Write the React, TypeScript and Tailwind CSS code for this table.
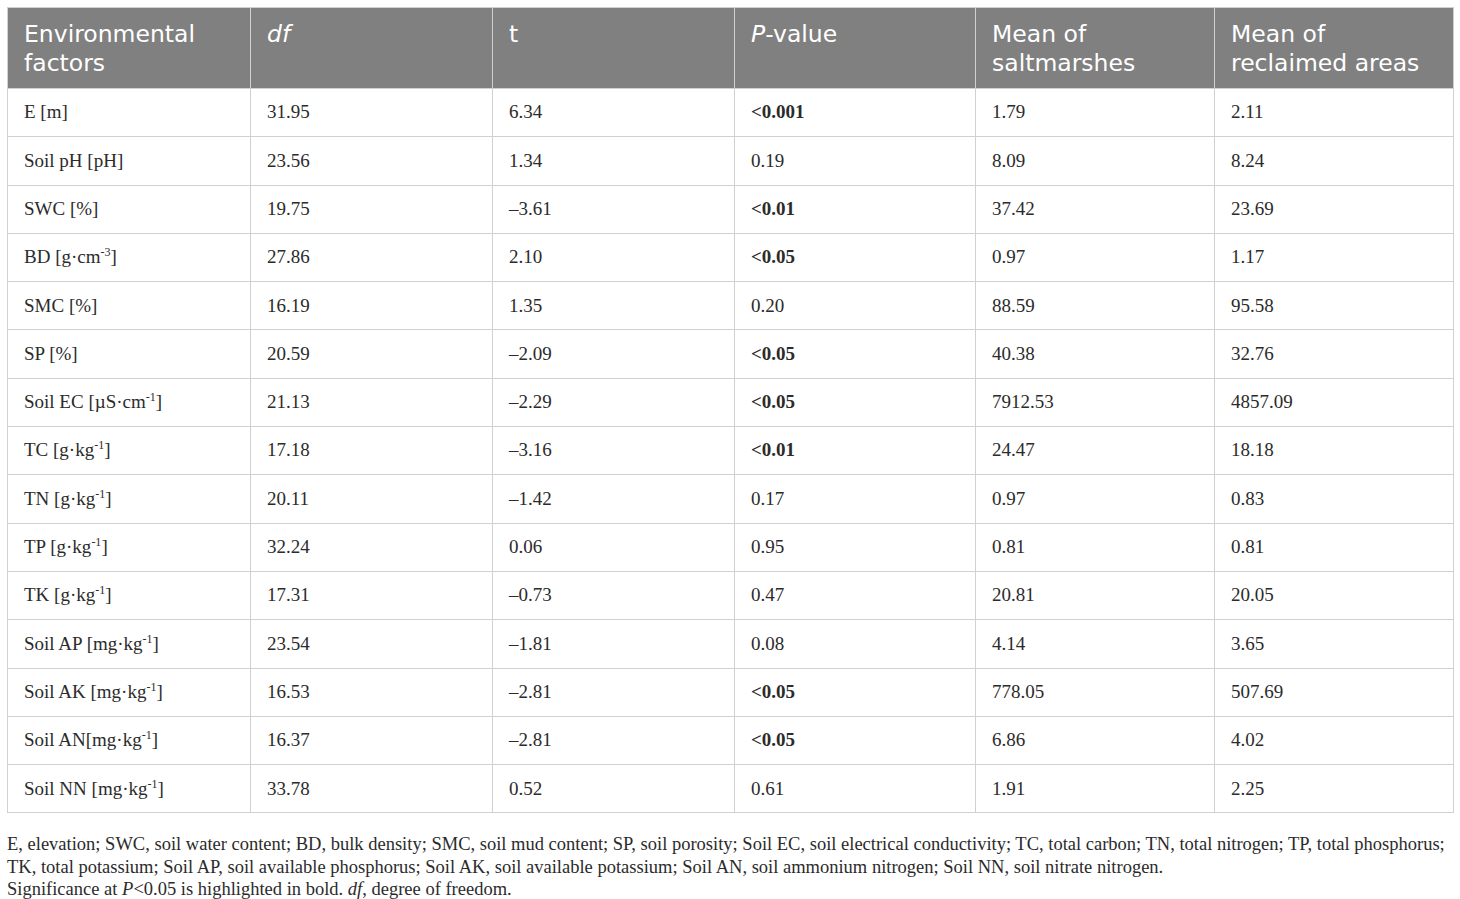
import React from 'react';

type Row = {
  factor: React.ReactNode;
  df: string;
  t: string;
  p: string;
  sig: boolean;
  salt: string;
  recl: string;
};

// unit with superscript exponent
const unit = (base: string, sup: string, tail = ']') => (
  <>
    {base}
    <span className="text-[12px] relative -top-[7px]">{sup}</span>
    {tail}
  </>
);

const rows: Row[] = [
  { factor: 'E [m]', df: '31.95', t: '6.34', p: '<0.001', sig: true, salt: '1.79', recl: '2.11' },
  { factor: 'Soil pH [pH]', df: '23.56', t: '1.34', p: '0.19', sig: false, salt: '8.09', recl: '8.24' },
  { factor: 'SWC [%]', df: '19.75', t: '–3.61', p: '<0.01', sig: true, salt: '37.42', recl: '23.69' },
  { factor: unit('BD [g·cm', '-3'), df: '27.86', t: '2.10', p: '<0.05', sig: true, salt: '0.97', recl: '1.17' },
  { factor: 'SMC [%]', df: '16.19', t: '1.35', p: '0.20', sig: false, salt: '88.59', recl: '95.58' },
  { factor: 'SP [%]', df: '20.59', t: '–2.09', p: '<0.05', sig: true, salt: '40.38', recl: '32.76' },
  { factor: unit('Soil EC [µS·cm', '-1'), df: '21.13', t: '–2.29', p: '<0.05', sig: true, salt: '7912.53', recl: '4857.09' },
  { factor: unit('TC [g·kg', '-1'), df: '17.18', t: '–3.16', p: '<0.01', sig: true, salt: '24.47', recl: '18.18' },
  { factor: unit('TN [g·kg', '-1'), df: '20.11', t: '–1.42', p: '0.17', sig: false, salt: '0.97', recl: '0.83' },
  { factor: unit('TP [g·kg', '-1'), df: '32.24', t: '0.06', p: '0.95', sig: false, salt: '0.81', recl: '0.81' },
  { factor: unit('TK [g·kg', '-1'), df: '17.31', t: '–0.73', p: '0.47', sig: false, salt: '20.81', recl: '20.05' },
  { factor: unit('Soil AP [mg·kg', '-1'), df: '23.54', t: '–1.81', p: '0.08', sig: false, salt: '4.14', recl: '3.65' },
  { factor: unit('Soil AK [mg·kg', '-1'), df: '16.53', t: '–2.81', p: '<0.05', sig: true, salt: '778.05', recl: '507.69' },
  { factor: unit('Soil AN[mg·kg', '-1'), df: '16.37', t: '–2.81', p: '<0.05', sig: true, salt: '6.86', recl: '4.02' },
  { factor: unit('Soil NN [mg·kg', '-1'), df: '33.78', t: '0.52', p: '0.61', sig: false, salt: '1.91', recl: '2.25' },
];

const th = 'border border-[#d0d0d0] border-t-0 first:border-l-0 last:border-r-0 px-4 pt-[12px] pb-[10px] text-left align-top font-normal';
const td = 'border border-[#d0d0d0] px-4 h-[48.3px] align-middle';

export default function App() {
  return (
    <div className="w-[1460px] h-[899px] bg-white pt-[7px] px-[7px] text-[#2b2b2b]" style={{ fontFamily: '"Liberation Serif", serif' }}>
      <table className="w-[1446px] border-collapse table-fixed border border-[#d0d0d0]">
        <colgroup>
          <col className="w-[243px]" />
          <col className="w-[242px]" />
          <col className="w-[242px]" />
          <col className="w-[241px]" />
          <col className="w-[239px]" />
          <col className="w-[239px]" />
        </colgroup>
        <thead>
          <tr className="bg-[#808080] text-white text-[23.5px] leading-[29px]" style={{ fontFamily: '"DejaVu Sans", sans-serif' }}>
            <th className={th}>Environmental<br />factors</th>
            <th className={th}><i>df</i></th>
            <th className={th}>t</th>
            <th className={th}><i>P</i>-value</th>
            <th className={th}>Mean of<br />saltmarshes</th>
            <th className={th}>Mean of<br />reclaimed areas</th>
          </tr>
        </thead>
        <tbody className="text-[19px]">
          {rows.map((r, i) => (
            <tr key={i}>
              <td className={td}>{r.factor}</td>
              <td className={td}>{r.df}</td>
              <td className={td}>{r.t}</td>
              <td className={td + (r.sig ? ' font-bold' : '')}>{r.p}</td>
              <td className={td}>{r.salt}</td>
              <td className={td}>{r.recl}</td>
            </tr>
          ))}
        </tbody>
      </table>
      <div className="mt-[20px] text-[18.5px] leading-[22.5px] whitespace-nowrap">
        <p>
          E, elevation; SWC, soil water content; BD, bulk density; SMC, soil mud content; SP, soil porosity; Soil EC, soil electrical conductivity; TC, total carbon; TN, total nitrogen; TP, total phosphorus;
          <br />
          TK, total potassium; Soil AP, soil available phosphorus; Soil AK, soil available potassium; Soil AN, soil ammonium nitrogen; Soil NN, soil nitrate nitrogen.
        </p>
        <p>
          Significance at <i>P</i>&lt;0.05 is highlighted in bold. <i>df</i>, degree of freedom.
        </p>
      </div>
    </div>
  );
}
